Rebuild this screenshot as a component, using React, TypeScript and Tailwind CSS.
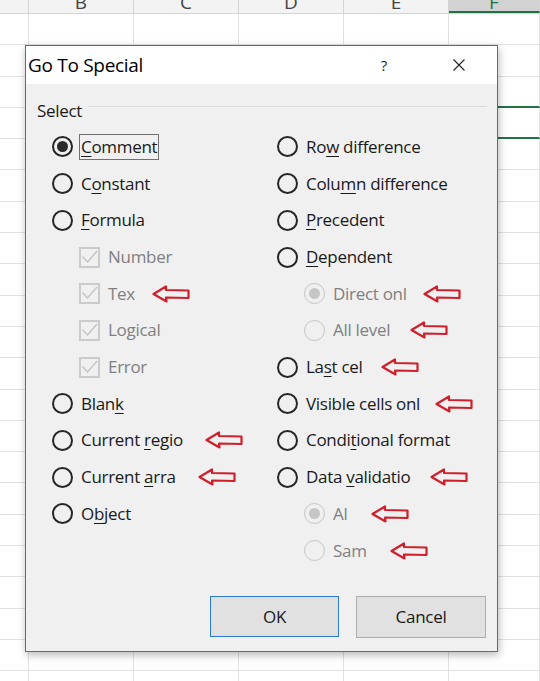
import type { ReactNode } from 'react';

const FONT = "font-['Open_Sans',_'Noto_Sans',_sans-serif]";

const COLS = [
  { w: 'w-[29px]', label: '' },
  { w: 'w-[105px]', label: 'B' },
  { w: 'w-[105px]', label: 'C' },
  { w: 'w-[105px]', label: 'D' },
  { w: 'w-[105px]', label: 'E' },
  { w: 'flex-1', label: 'F' },
];

function U({ children }: { children: ReactNode }) {
  return <span className="underline decoration-1 underline-offset-[3px]">{children}</span>;
}

function Radio({ checked, disabled }: { checked?: boolean; disabled?: boolean }) {
  return (
    <span
      className={
        'flex size-[21px] shrink-0 items-center justify-center rounded-full bg-[#f0f0f0] ' +
        (disabled ? 'border-[1.5px] border-[#c4c4c4]' : 'border-2 border-[#262626]')
      }
    >
      {checked && (
        <span
          className={'size-[11px] rounded-full ' + (disabled ? 'bg-[#c6c6c6]' : 'bg-[#2b2b2b]')}
        />
      )}
    </span>
  );
}

function Check() {
  return (
    <span className="flex size-[21px] shrink-0 items-center justify-center border-2 border-[#cbcbcb]">
      <svg width="17" height="17" viewBox="0 0 17 17" fill="none">
        <path d="M1.5 7.5 L6.5 13 L16 2" stroke="#c4c4c4" strokeWidth="1.4" />
      </svg>
    </span>
  );
}

// red annotation arrows drawn over the dialog
function Arrow({ gap }: { gap: string }) {
  return (
    <svg className={gap + ' shrink-0'} width="38" height="18" viewBox="0 0 38 18" fill="none">
      <path
        d="M1.5 9 L14 1.5 L14 5 L36.5 5.5 L36.5 13 L14 12.5 L14.5 16.5 Z"
        stroke="#cf1f2c"
        strokeWidth="2.2"
        strokeLinejoin="round"
      />
    </svg>
  );
}

type Item = {
  kind: 'radio' | 'sub' | 'check';
  label: ReactNode;
  checked?: boolean;
  focus?: boolean;
  arrow?: string;
};

const LEFT: Item[] = [
  { kind: 'radio', checked: true, focus: true, label: <><U>C</U>omment</> },
  { kind: 'radio', label: <>C<U>o</U>nstant</> },
  { kind: 'radio', label: <><U>F</U>ormula</> },
  { kind: 'check', label: 'Number' },
  { kind: 'check', label: 'Tex', arrow: 'ml-[15px]' },
  { kind: 'check', label: 'Logical' },
  { kind: 'check', label: 'Error' },
  { kind: 'radio', label: <>Blan<U>k</U></> },
  { kind: 'radio', label: <>Current <U>r</U>egio</>, arrow: 'ml-[20px]' },
  { kind: 'radio', label: <>Current <U>a</U>rra</>, arrow: 'ml-[20px]' },
  { kind: 'radio', label: <>O<U>b</U>ject</> },
];

const RIGHT: Item[] = [
  { kind: 'radio', label: <>Ro<U>w</U> difference</> },
  { kind: 'radio', label: <>Colu<U>m</U>n difference</> },
  { kind: 'radio', label: <><U>P</U>recedent</> },
  { kind: 'radio', label: <><U>D</U>ependent</> },
  { kind: 'sub', checked: true, label: 'Direct onl', arrow: 'ml-[14px]' },
  { kind: 'sub', label: 'All level', arrow: 'ml-[18px]' },
  { kind: 'radio', label: <>La<U>s</U>t cel</>, arrow: 'ml-[16px]' },
  { kind: 'radio', label: 'Visible cells onl', arrow: 'ml-[13px]' },
  { kind: 'radio', label: <>Condi<U>t</U>ional format</> },
  { kind: 'radio', label: <>Data <U>v</U>alidatio</>, arrow: 'ml-[18px]' },
  { kind: 'sub', checked: true, label: 'Al', arrow: 'ml-[22px]' },
  { kind: 'sub', label: 'Sam', arrow: 'ml-[21px]' },
];

function Row({ item }: { item: Item }) {
  const muted = item.kind !== 'radio';
  return (
    <div className={'flex h-[36.7px] items-center ' + (item.kind === 'radio' ? '' : 'pl-[27px]')}>
      {item.kind === 'check' ? (
        <Check />
      ) : (
        <Radio checked={item.checked} disabled={item.kind === 'sub'} />
      )}
      <span
        className={
          'ml-[6px] leading-[24px] whitespace-nowrap ' +
          (muted ? 'text-[#808080] ' : 'text-[#1a1a1a] ') +
          (item.focus ? 'border border-[#707070] px-[1px] ' : 'px-[2px]')
        }
      >
        {item.label}
      </span>
      {item.arrow && <Arrow gap={item.arrow} />}
    </div>
  );
}

function Sheet() {
  return (
    <div className="flex h-[681px] flex-col overflow-hidden bg-white">
      <div className="flex h-[14px] shrink-0 border-b border-[#d4d4d4] bg-[#f3f3f3]">
        {COLS.map((c, i) => (
          <div
            key={i}
            className={
              c.w +
              ' flex justify-center overflow-hidden border-r border-[#d4d4d4] ' +
              (c.label === 'F' ? 'border-b-2 border-b-[#217346] bg-[#d2d2d2] text-[#217346]' : 'text-[#444]')
            }
          >
            <span className="mt-[-10px] text-[19px] leading-[24px]">{c.label}</span>
          </div>
        ))}
      </div>
      {Array.from({ length: 22 }).map((_, r) => (
        <div key={r} className="flex h-[31.3px] shrink-0">
          {COLS.map((c, i) => (
            <div
              key={i}
              className={
                c.w +
                ' border-r border-b border-[#e1e1e1] ' +
                ((r === 2 || r === 3) && i === 5 ? 'border-b-2 border-b-[#217346] ' : '')
              }
            />
          ))}
        </div>
      ))}
    </div>
  );
}

export default function App() {
  return (
    <div className={'relative h-[681px] w-[540px] overflow-hidden ' + FONT}>
      <Sheet />
      <div className="absolute top-[45px] left-[25px] flex h-[607px] w-[473px] flex-col border border-[#6a6a6a] bg-[#f0f0f0] text-[17px] tracking-[-0.3px] shadow-[1px_3px_8px_rgba(0,0,0,0.28)]">
        <div className="flex h-[38px] shrink-0 items-center bg-white">
          <span className="pl-[2px] text-[19px] text-black">Go To Special</span>
          <span className="ml-auto text-[15px] text-[#222]">?</span>
          <svg className="mr-[32px] ml-[66px]" width="12" height="12" viewBox="0 0 12 12">
            <path d="M0.5 0.5 L11.5 11.5 M11.5 0.5 L0.5 11.5" stroke="#222" strokeWidth="1.1" />
          </svg>
        </div>

        <div className="box-content flex h-[24px] items-start pt-[15px] pr-[10px] pl-[11px]">
          <span className="leading-[24px] text-[#1a1a1a]">Select</span>
          <span className="mt-[7px] ml-[6px] h-px flex-1 bg-[#dddddd]" />
        </div>

        <div className="mt-[5.6px] flex pl-[26px]">
          <div className="flex w-[225px] flex-col">
            {LEFT.map((it, i) => (
              <Row key={i} item={it} />
            ))}
          </div>
          <div className="flex flex-1 flex-col">
            {RIGHT.map((it, i) => (
              <Row key={i} item={it} />
            ))}
          </div>
        </div>

        <div className="mt-auto flex justify-end gap-[17px] pr-[11px] pb-[13px]">
          <button className="h-[41px] w-[129px] border border-[#2e7bd3] bg-[#e1e1e1] text-[#1a1a1a] shadow-[inset_0_0_0_1px_#cfe3f5]">
            OK
          </button>
          <button className="h-[42px] w-[130px] border border-[#adadad] bg-[#e1e1e1] text-[#1a1a1a]">
            Cancel
          </button>
        </div>
      </div>
    </div>
  );
}
